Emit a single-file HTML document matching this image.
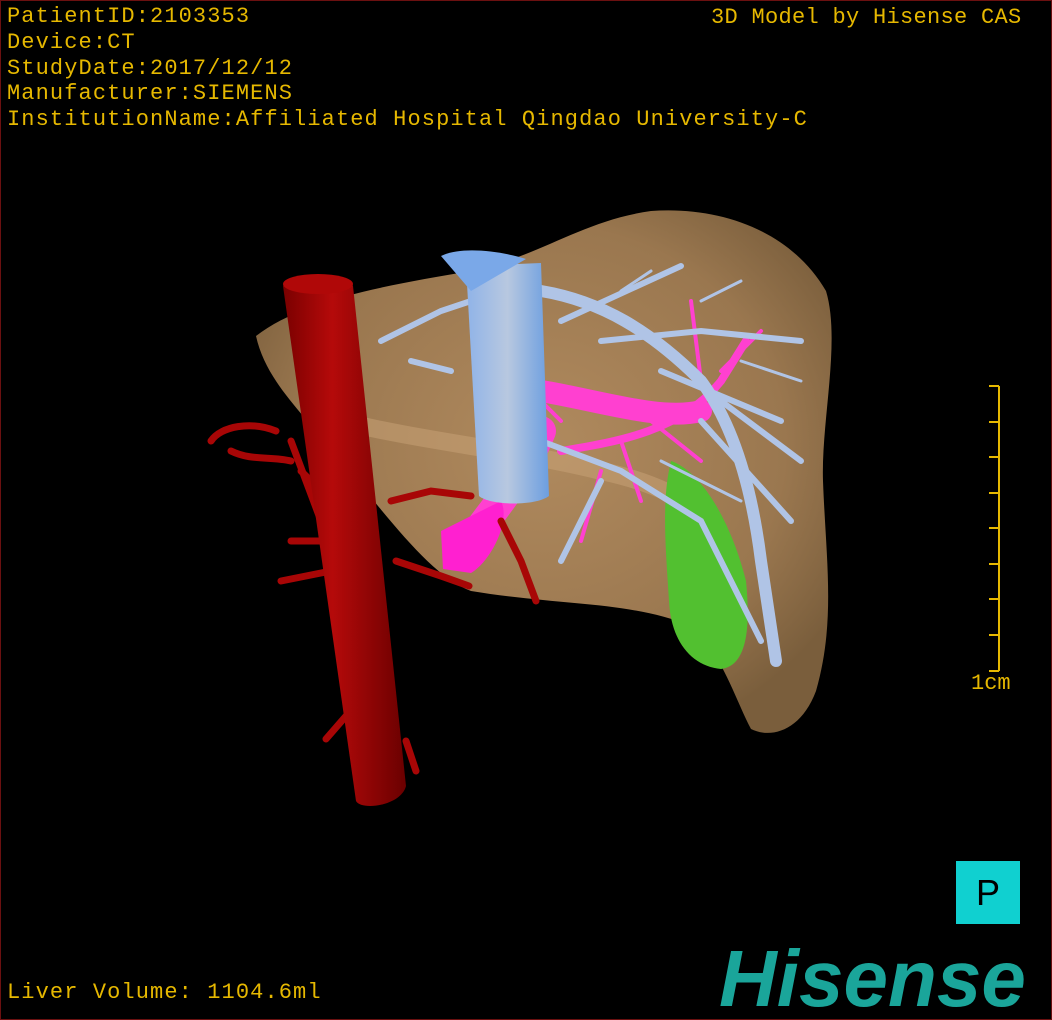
<!DOCTYPE html>
<html><head><style>
html,body{margin:0;padding:0;background:#000;}
#c{position:relative;width:1050px;height:1018px;background:#000;border:1px solid #6b1010;overflow:hidden;}
.t{position:absolute;color:#e6b800;font-size:22px;line-height:25px;white-space:pre;font-family:"Liberation Mono","DejaVu Sans Mono",monospace;letter-spacing:1.1px;}
</style></head><body><div id="c">
<svg width="1050" height="1018" style="position:absolute;left:0;top:0">
<defs>
<radialGradient id="lv" cx="0.5" cy="0.45" r="0.6"><stop offset="0" stop-color="#b08a5e"/><stop offset="0.7" stop-color="#9a774f"/><stop offset="1" stop-color="#7a5e3c"/></radialGradient>
<linearGradient id="ivc" x1="0" x2="1"><stop offset="0" stop-color="#8fb3e8"/><stop offset="0.5" stop-color="#b8c8e0"/><stop offset="1" stop-color="#6c9ee0"/></linearGradient>
<linearGradient id="ao" x1="0" x2="1"><stop offset="0" stop-color="#7a0000"/><stop offset="0.4" stop-color="#b50a0a"/><stop offset="1" stop-color="#6a0000"/></linearGradient>
</defs>
<path d="M255 335 C300 300 380 285 470 270 C540 255 580 220 650 210 C720 205 790 230 825 290 C840 340 820 420 822 480 C825 560 835 620 815 690 C800 730 770 738 750 728 C735 700 720 650 690 625 C630 600 560 605 470 590 C430 575 390 520 340 460 C300 410 265 380 255 335 Z" fill="url(#lv)"/>
<path d="M340 420 C420 440 520 450 600 470 C650 480 690 500 710 520" stroke="#c9a478" stroke-width="18" fill="none" opacity="0.5"/>
<path d="M670 460 C700 470 730 520 745 580 C750 630 745 665 720 668 C690 665 670 640 668 600 C665 550 660 500 670 460 Z" fill="#52c030"/>
<g stroke="#ff40d0" fill="none" stroke-linecap="round">
<path d="M540 390 C600 400 660 420 700 410" stroke-width="22"/>
<path d="M470 540 C490 510 520 480 540 430" stroke-width="30"/>
<path d="M560 450 C620 440 680 430 720 380 L745 340" stroke-width="8"/>
<path d="M700 380 L690 300 M720 370 L760 330 M620 440 L640 500 M560 420 L500 360 M600 470 L580 540 M650 420 L700 460" stroke-width="4"/>
</g>
<path d="M440 530 L500 500 C510 520 490 560 470 572 L442 568 Z" fill="#ff20d0"/>
<g stroke="#b0c4e6" fill="none" stroke-linecap="round">
<path d="M540 290 C600 300 650 330 700 380 C730 420 750 480 760 560 L775 660" stroke-width="12"/>
<path d="M560 320 L680 265 M600 340 L700 330 L800 340 M660 370 L780 420 M700 420 L790 520 M540 440 L620 470 L700 520 L760 640 M380 340 L440 310 L470 300 M410 360 L450 370 M600 480 L560 560 M720 400 L800 460" stroke-width="6"/>
<path d="M620 290 L650 270 M700 300 L740 280 M740 360 L800 380 M660 460 L740 500" stroke-width="3"/>
</g>
<path d="M465 265 L540 262 L548 495 C535 505 490 505 478 495 Z" fill="url(#ivc)"/>
<path d="M440 255 C460 245 500 250 525 258 L470 290 Z" fill="#7aa8e8"/>
<g stroke="#a80606" fill="none" stroke-linecap="round">
<path d="M390 500 L430 490 L470 495 M395 560 L440 575 L468 585 M300 470 L330 500 M280 580 L330 570 M290 540 L330 540 M210 440 C220 425 250 420 275 430 M230 450 C250 460 270 455 290 460 M290 440 L320 520 M500 520 L520 560 L535 600 M405 740 L415 770 M345 715 L325 738" stroke-width="7"/>
</g>
<path d="M282 285 C290 272 345 272 352 285 L405 785 C400 805 360 810 355 800 Z" fill="url(#ao)"/>
<ellipse cx="317" cy="283" rx="35" ry="10" fill="#b00808"/>
<g stroke="#e6b800" stroke-width="2" fill="none">
<path d="M998 385 L998 670 M988 385 L998 385 M988 421 L998 421 M988 456 L998 456 M988 492 L998 492 M988 527 L998 527 M988 563 L998 563 M988 598 L998 598 M988 634 L998 634 M988 670 L998 670"/>
</g>
</svg>
<div class="t" style="left:6px;top:3px">PatientID:2103353</div>
<div class="t" style="left:6px;top:29px">Device:CT</div>
<div class="t" style="left:6px;top:55px">StudyDate:2017/12/12</div>
<div class="t" style="left:6px;top:80px">Manufacturer:SIEMENS</div>
<div class="t" style="left:6px;top:106px">InstitutionName:Affiliated Hospital Qingdao University-C</div>
<div class="t" style="left:710px;top:4px;letter-spacing:0.3px">3D Model by Hisense CAS</div>
<div class="t" style="left:970px;top:670px;letter-spacing:0">1cm</div>
<div class="t" style="left:6px;top:979px">Liver Volume: 1104.6ml</div>
<div style="position:absolute;left:955px;top:860px;width:64px;height:63px;background:#10d0d0;color:#000;font:36px 'Liberation Sans',sans-serif;text-align:center;line-height:63px">P</div>
<div style="position:absolute;left:718px;top:938px;color:#1aa59a;font:italic bold 80px/80px 'Liberation Sans',sans-serif;letter-spacing:0">Hisense</div>
</div></body></html>
